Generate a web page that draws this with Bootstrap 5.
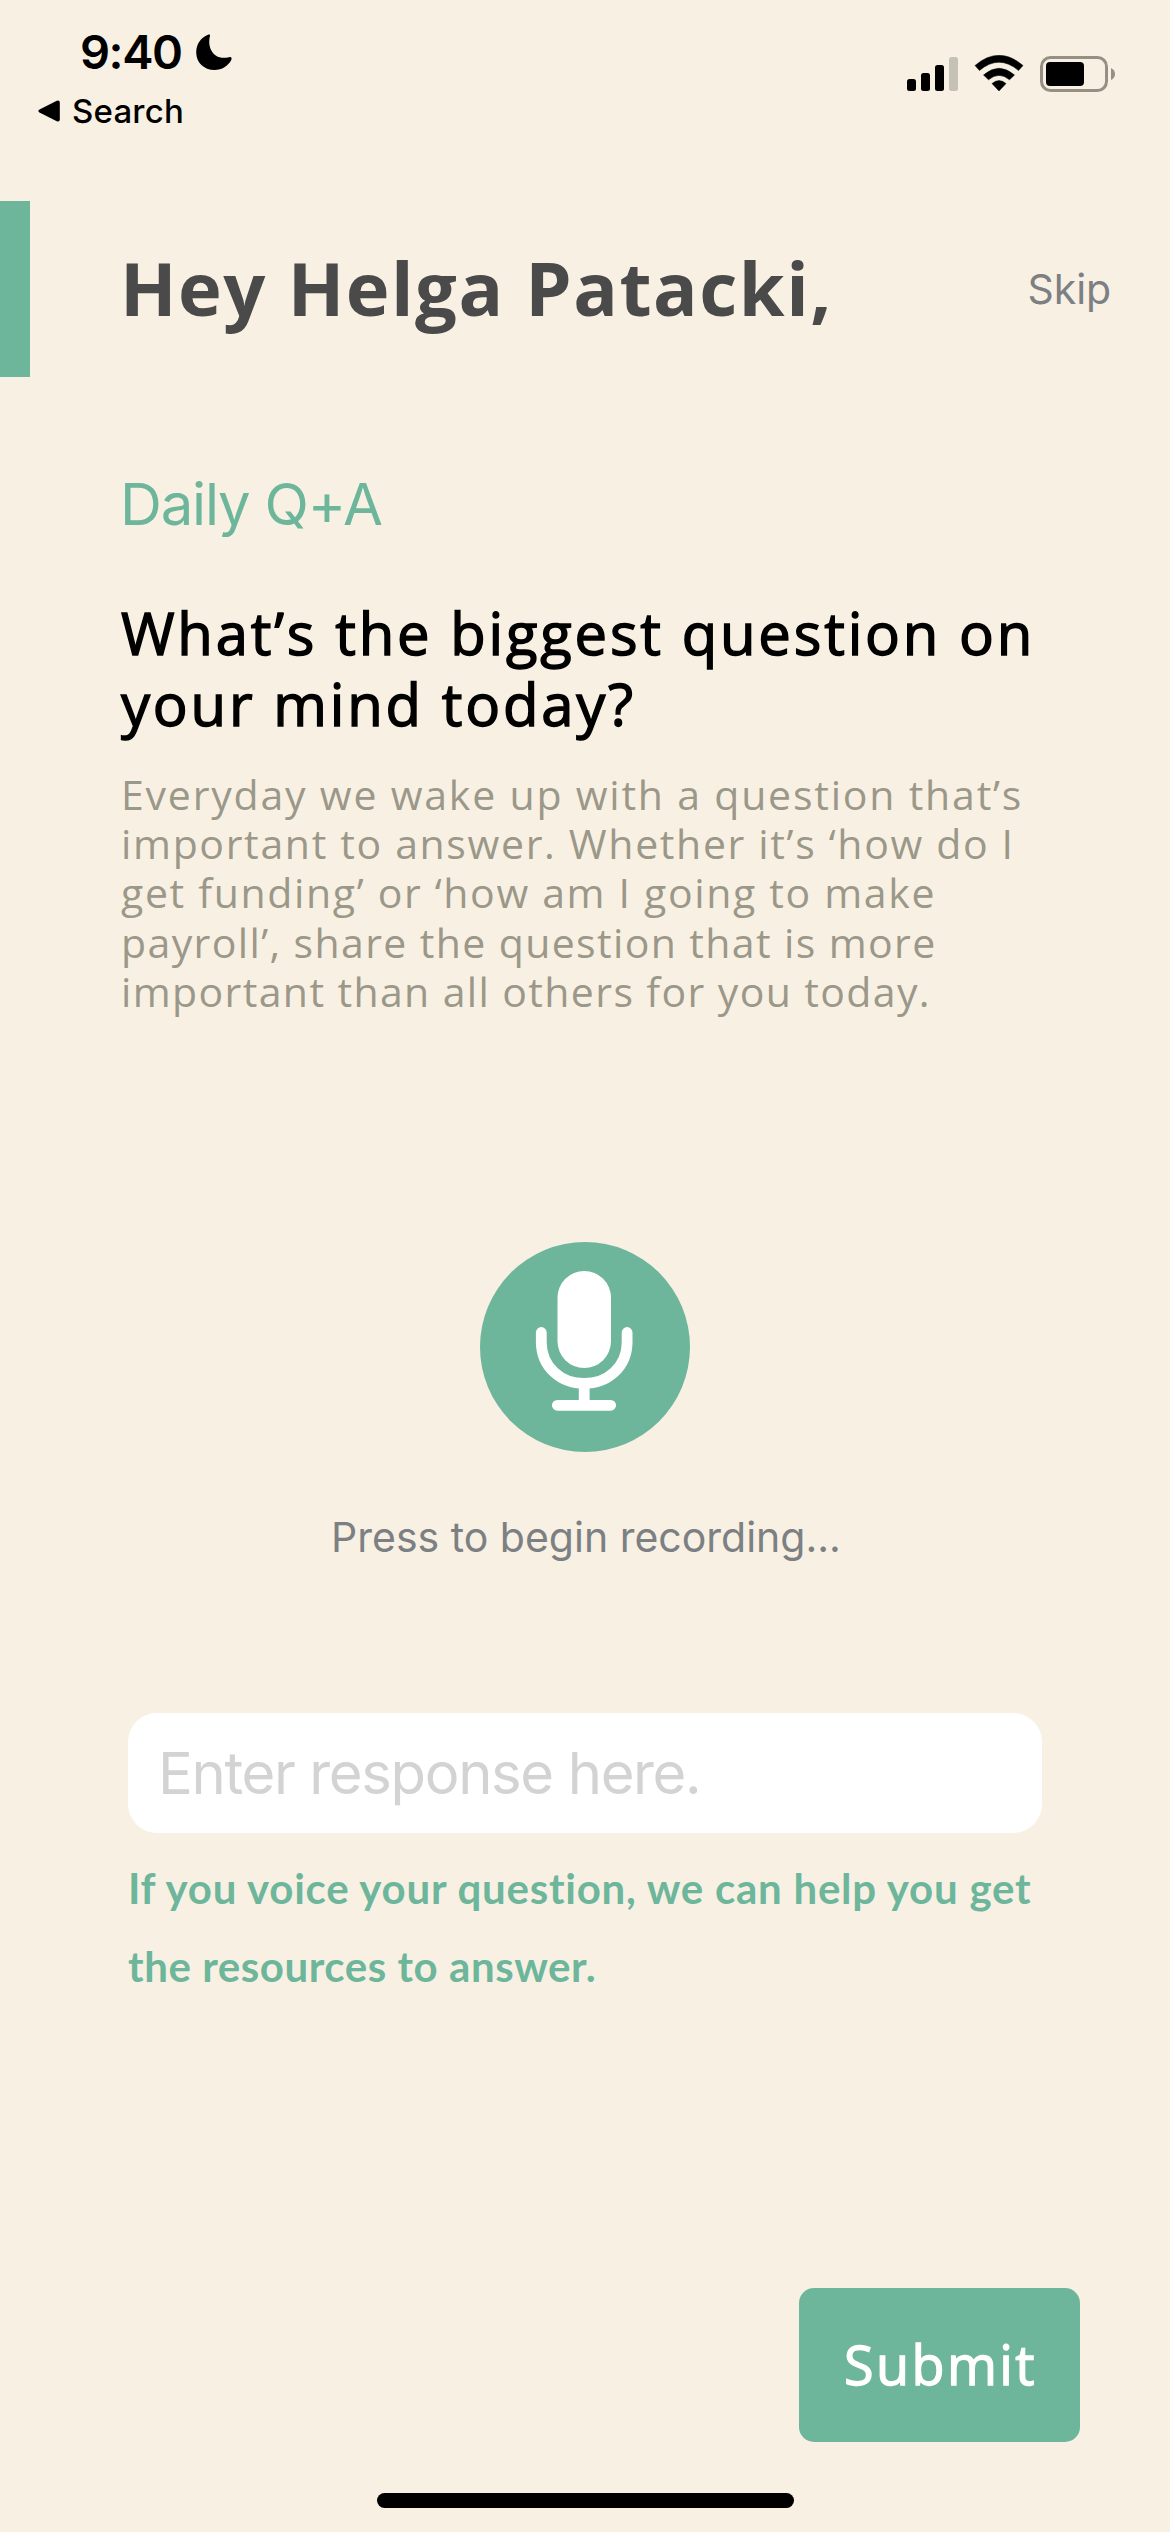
<!DOCTYPE html>
<html lang="en">
<head>
<meta charset="utf-8">
<meta name="viewport" content="width=device-width, initial-scale=1">
<title>Daily Q+A</title>
<link rel="stylesheet" href="https://cdn.jsdelivr.net/npm/bootstrap@5.3.0/dist/css/bootstrap.min.css">
<style>
  :root { --mint: #6db69c; --cream: #f8f1e3; }
  body { background: var(--cream); color: #000; font-family: Inter, "Liberation Sans", sans-serif; }
  .screen { width: 1170px; height: 2532px; overflow: hidden; }
  svg { display: block; flex: none; }

  .statusbar { height: 201px; padding: 24px 55px 0 38px; }
  .clock { font-size: 47px; font-weight: 600; line-height: 56px; letter-spacing: -1.45px; padding-left: 42px; gap: 14px; }
  .back-link { font-size: 33px; font-weight: 500; line-height: 40px; letter-spacing: .2px; margin-top: 11px; gap: 12px; color: #000; }
  .indicators { margin-top: 31px; }

  .greeting { height: 176px; padding-right: 59px; }
  .accent { width: 30px; background: var(--mint); }
  .greeting h1 { font: 700 74px/100px "Open Sans", sans-serif; letter-spacing: 1.5px; color: #4a4a4a; margin: 0 0 2px 90px; }
  .skip { font-size: 41px; line-height: 50px; letter-spacing: -.1px; color: #7c8083; }

  .prompt { padding: 92px 0 0 121px; }
  .prompt h2 { font-size: 58px; font-weight: 400; line-height: 70px; letter-spacing: -1.19px; color: var(--mint); margin: 0 0 58px -1px; }
  .question { font: 400 58px/71px "Open Sans", sans-serif; letter-spacing: 2.8px; -webkit-text-stroke: 1.4px #000; margin: 0 0 31px; }
  .details { font: 400 41px/49.2px "Open Sans", sans-serif; letter-spacing: 1.66px; color: #9b988a; margin: 0; }
  .details span, .question span, .hint span { display: block; white-space: nowrap; }
  .details .loose { letter-spacing: 1.8px; }
  .details .tight { letter-spacing: 1.38px; }

  .recorder { margin-top: 226px; }
  .recorder p { font-size: 41px; line-height: 50px; color: #7c8083; margin: 60px 0 0; padding-left: 2px; }

  .answer { margin: 151px 128px 0; }
  .answer .form-control { height: 120px; border: 0; border-radius: 29px; padding: 0 30px; font-size: 58px; letter-spacing: -1.36px; background: #fff; }
  .answer .form-control::placeholder { color: #d3d3d3; opacity: 1; }
  .hint { font: 700 42px/78px Lato, sans-serif; letter-spacing: .56px; color: var(--mint); margin: 16px 0 0; }
  .hint .loose { letter-spacing: .76px; }

  .actions { margin-top: 283px; padding-right: 90px; }
  .btn-submit, .btn-submit:hover { width: 281px; height: 154px; border: 0; border-radius: 15px; background: var(--mint); color: #fff; font: 400 54px/60px "Open Sans", sans-serif; letter-spacing: 2.4px; -webkit-text-stroke: 1.3px #fff; padding: 0 0 3px 2px; }
  .home-bar { width: 417px; height: 15px; background: #000; margin: 51px auto 0; }
</style>
</head>
<body>
<main class="screen d-flex flex-column">
  <header class="statusbar d-flex justify-content-between align-items-start">
    <div>
      <div class="clock d-flex align-items-center">
        <span>9:40</span>
        <svg width="36" height="36" viewBox="0 0 36 36"><path d="M12 .8C13 0 14.500 .3 14 2C11 13 17 27 33 23.200C35.500 22.700 36 24 35.300 26C32 32 26 36 18.500 36C8 36 .2 28.500 .2 18.500C.2 10 5 3.500 12 .8Z"/></svg>
      </div>
      <a class="back-link d-flex align-items-center text-decoration-none" href="#">
        <svg width="22" height="22" viewBox="0 0 22 22"><path d="M1.500 9.500 18.800.8Q21.800-.2 21.800 2.800V19.200Q21.800 22.200 18.800 21.200L1.500 12.500Q-.8 11 1.500 9.500Z"/></svg>
        <span>Search</span>
      </a>
    </div>
    <svg class="indicators" width="208" height="38" viewBox="0 0 208 38">
      <rect x="0" y="24" width="9" height="12" rx="2.500"/>
      <rect x="14" y="18" width="9" height="18" rx="2.500"/>
      <rect x="28" y="10" width="9" height="26" rx="2.500"/>
      <rect x="42" y="2" width="9" height="34" rx="2.500" fill="#c6c1b5"/>
      <path d="M68 10.500Q92-10 116 10.500L111.500 15.500Q92-1 72.500 15.500Z" stroke="#000" stroke-width=".5" stroke-linejoin="round"/>
      <path d="M76.500 20Q92 6.500 107.500 20L102.500 24.800Q92 16 81.500 24.800Z" stroke="#000" stroke-width=".5" stroke-linejoin="round"/>
      <path d="M85 28.600Q92 22.500 99 28.600L92 36Z" stroke="#000" stroke-width=".5" stroke-linejoin="round"/>
      <rect x="134.500" y="2.500" width="65" height="33" rx="9" fill="none" stroke="#969084" stroke-width="3"/>
      <rect x="139" y="7" width="38" height="24" rx="4"/>
      <path d="M204 13Q208 15 208 19T204 25Z" fill="#969084"/>
    </svg>
  </header>

  <section class="greeting d-flex align-items-center">
    <div class="accent align-self-stretch"></div>
    <h1>Hey Helga Patacki,</h1>
    <a class="skip ms-auto text-decoration-none" href="#">Skip</a>
  </section>

  <section class="prompt">
    <h2>Daily Q+A</h2>
    <p class="question"><span>What’s the biggest question on</span><span>your mind today?</span></p>
    <p class="details"><span class="loose">Everyday we wake up with a question that’s</span><span>important to answer. Whether it’s ‘how do I</span><span>get funding’ or ‘how am I going to make</span><span class="tight">payroll’, share the question that is more</span><span class="tight">important than all others for you today.</span></p>
  </section>

  <section class="recorder d-flex flex-column align-items-center">
    <svg width="210" height="210" viewBox="0 0 210 210" role="img" aria-label="Record">
      <circle cx="105" cy="105" r="105" fill="#6db69c"/>
      <rect x="77.500" y="29" width="53.500" height="97" rx="26.750" fill="#fff"/>
      <path d="M61.300 90.500V100C61.300 125 81 141.500 104.200 141.500S147.100 125 147.100 100V90.500M104.200 141.500V163M77.300 163.300H130.700" fill="none" stroke="#fff" stroke-width="10.800" stroke-linecap="round"/>
    </svg>
    <p>Press to begin recording...</p>
  </section>

  <section class="answer">
    <input class="form-control" type="text" placeholder="Enter response here.">
    <p class="hint"><span class="loose">If you voice your question, we can help you get</span><span>the resources to answer.</span></p>
  </section>

  <div class="actions d-flex justify-content-end">
    <button class="btn btn-submit" type="button">Submit</button>
  </div>
  <div class="home-bar rounded-pill"></div>
</main>
<script src="https://cdn.jsdelivr.net/npm/bootstrap@5.3.0/dist/js/bootstrap.bundle.min.js"></script>
</body>
</html>
